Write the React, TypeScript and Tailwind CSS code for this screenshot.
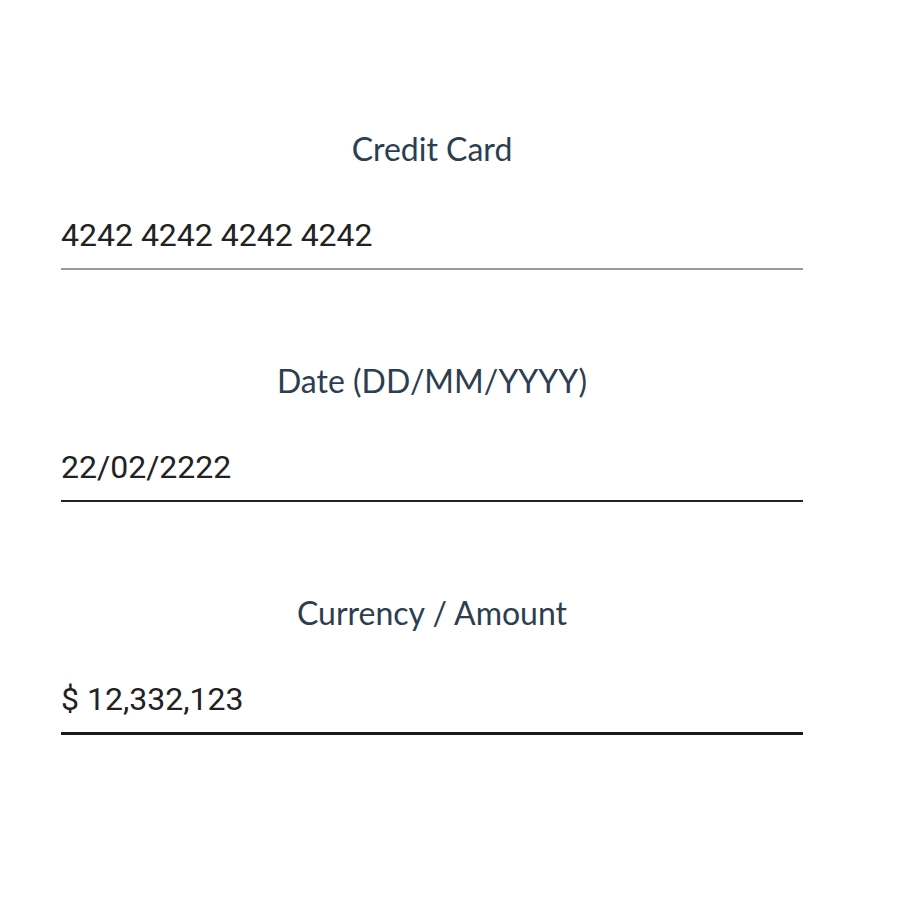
import React from 'react';

type Field = {
  label: string;
  value: string;
  line: string;
};

const fields: Field[] = [
  { label: 'Credit Card', value: '4242 4242 4242 4242', line: 'border-b-2 border-[#999999]' },
  { label: 'Date (DD/MM/YYYY)', value: '22/02/2222', line: 'border-b-2 border-[#222222]' },
  { label: 'Currency / Amount', value: '$ 12,332,123', line: 'border-b-[3px] border-[#1a1a1a]' },
];

export default function App() {
  return (
    <div className="min-h-[900px] w-[900px] bg-white">
      <div className="ml-[61px] w-[742px] pt-[129px] flex flex-col gap-[91px]">
        {fields.map((f) => (
          <div key={f.label} className="flex flex-col">
            <div className="h-10 text-center text-[32px] leading-10 text-[#2c3e50] font-['Lato',sans-serif]">
              {f.label}
            </div>
            <div
              className={`mt-[46px] pb-[13px] text-[32px] leading-10 text-[#222222] font-['Roboto',sans-serif] ${f.line}`}
            >
              {f.value}
            </div>
          </div>
        ))}
      </div>
    </div>
  );
}
